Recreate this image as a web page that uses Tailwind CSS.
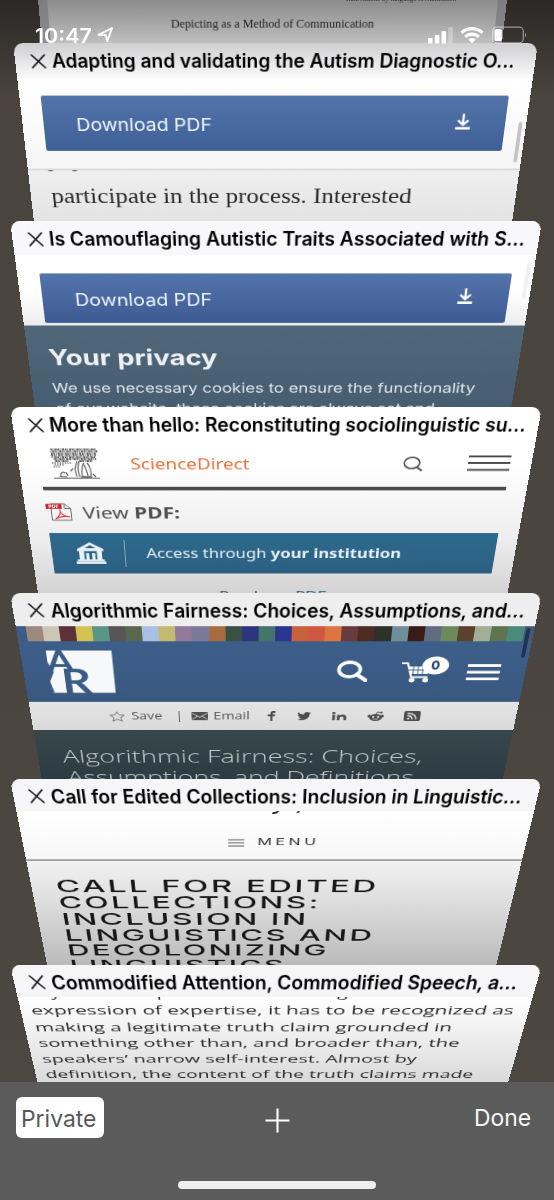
<!DOCTYPE html>
<html lang="en">
<head>
<meta charset="utf-8">
<title>Tabs</title>
<script src="https://cdn.jsdelivr.net/npm/@tailwindcss/browser@4"></script>
</head>
<body class="w-[554px] h-[1200px] overflow-hidden bg-[#4c463f] font-['Inter','Liberation_Sans',sans-serif]">
<svg class="hidden">
  <symbol id="close" viewBox="0 0 15 15"><path d="M1 1L14 14M14 1L1 14" stroke="#111" stroke-width="1.6" stroke-linecap="round"/></symbol>
  <symbol id="download" viewBox="0 0 16 17"><path d="M8 0V11.5M2.6 6.8L8 11.8L13.4 6.8" fill="none" stroke="#fff" stroke-width="2.4" stroke-linejoin="round"/><path d="M0.3 15.6H15.7" stroke="#fff" stroke-width="2.6"/></symbol>
</svg>
<div class="relative w-[554px] h-[1200px] overflow-hidden bg-linear-to-b from-[#2b2826] via-[#4a443e] via-8% to-[#4c4740]">

  <!-- status bar -->
  <div class="absolute z-20 top-0 left-0 w-full h-[46px] pt-[24px] pl-[35px] pr-[27px] flex items-start text-white">
    <div class="w-[57px] h-6 leading-[24px] text-[20px] font-semibold whitespace-nowrap"><span class="inline-block origin-left" data-w="57">10:47</span></div>
    <svg class="ml-[5px] mt-[3px] w-[17px] h-[16px]" viewBox="0 0 17 16"><path d="M1.5 7.8L15 1.2L10.3 14.2L8.8 8.2Z" fill="none" stroke="#fff" stroke-width="1.9" stroke-linejoin="round"/></svg>
    <svg class="ml-auto mt-[3px] w-[25px] h-[17px]" viewBox="0 0 25 17"><rect x="0" y="11" width="4.6" height="5.5" rx="1" fill="#fff"/><rect x="6.8" y="8" width="4.6" height="8.5" rx="1" fill="#fff"/><rect x="13.5" y="4" width="4.6" height="12.5" rx="1" fill="#fff"/><rect x="20.2" y="0" width="4.6" height="16.5" rx="1" fill="#fff" opacity=".3"/></svg>
    <svg class="ml-[7px] mt-[2px] w-[24px] h-[18px]" viewBox="0 0 24 18" fill="none" stroke="#fff" stroke-width="3.2"><path d="M1.5 6.8A15.2 15.2 0 0 1 22.5 6.8"/><path d="M5.3 10.9A9.6 9.6 0 0 1 18.7 10.9"/><path d="M12 17.2L8.3 13.6A5.3 5.3 0 0 1 15.7 13.6Z" fill="#fff" stroke="none"/></svg>
    <svg class="ml-[8px] mt-[2px] w-[35px] h-[18px]" viewBox="0 0 35 18"><rect x=".7" y="1.2" width="30.6" height="15.6" rx="4" fill="none" stroke="#fff" stroke-opacity=".5" stroke-width="1.2"/><rect x="2.4" y="3" width="7.4" height="12" rx="1.6" fill="#fff"/><path d="M33 6.5Q35 9 33 11.5Z" fill="#fff" opacity=".55"/></svg>
  </div>

  <!-- tab 0 -->
  <div class="h-[43px] overflow-hidden pl-[38px]">
    <div class="w-[469px] h-[60px] origin-[210px_0] [transform:matrix3d(1,0,0,0,0,1,0,0.00045,0,0,1,0,0,0,0,1)] bg-linear-to-b from-[#8b8b8b] to-[#bdbdbd] to-70% border-x-[9px] border-[#77777d]/70 flex flex-col font-['Liberation_Serif',serif] text-[#222]">
      <div class="h-[10px] leading-[10px] -mt-[7px] pl-[299px] text-[9px] whitespace-nowrap text-[#333]"><span class="inline-block origin-left" data-w="110">Innovations by language revitalization</span></div>
      <div class="mt-[13px] h-[16px] leading-[16px] pl-[123px] text-[12px] whitespace-nowrap"><span class="inline-block origin-left" data-w="205">Depicting as a Method of Communication</span></div>
    </div>
  </div>

  <!-- tab 1 -->
  <div class="h-[178px] overflow-hidden pl-[13px]">
    <div class="relative w-[525px] h-[220px] origin-[235px_0] [transform:matrix3d(1,0,0,0,0,1,0,0.0005,0,0,1,0,0,0,0,1)] rounded-t-[10px] bg-linear-to-b from-[#cfcfd2] via-white via-18% to-[#f6f6f6] to-60% overflow-hidden flex flex-col">
      <div class="h-[35px] shrink-0 pl-[16px] pt-px flex items-center whitespace-nowrap">
        <svg class="w-[15px] h-[15px]"><use href="#close"/></svg>
        <div class="ml-[6px] text-[19.5px] leading-[28px] font-semibold text-black origin-left" data-w="468">Adapting and validating the Autism Diagnostic O...</div>
      </div>
      <div class="mt-[19px] ml-[22px] w-[481px] h-[60px] shrink-0 rounded-[2px] bg-linear-to-b from-[#5374ab] to-[#3f6097] flex items-center text-[#eef5ff]">
        <div class="w-[377px] ml-[34px] text-[19px] whitespace-nowrap pt-[4px]"><span class="inline-block origin-left" data-w="141">Download PDF</span></div>
        <svg class="ml-[18px] -mt-[4px] w-[16px] h-[18px]"><use href="#download"/></svg>
      </div>
      <div class="mt-[20px] h-[86px] shrink-0 overflow-hidden border-t-2 border-[#dadada] bg-linear-to-b from-[#efefef] to-[#dedede] font-['Liberation_Serif',serif] text-[25px] text-[#2b2b2b] whitespace-nowrap">
        <div class="-mt-[27px] h-[30px] leading-[30px] pl-[21px]"><span class="inline-block origin-left" data-w="39">pop</span></div>
        <div class="mt-[12px] h-[30px] leading-[30px] pl-[22px]"><span class="inline-block origin-left" data-w="390">participate in the process. Interested</span></div>
      </div>
      <div class="absolute left-[517px] top-[82px] w-[4px] h-[45px] rounded-full bg-[#c4c4c6]"></div>
    </div>
  </div>

  <!-- tab 2 -->
  <div class="h-[186px] overflow-hidden pl-[9.5px]">
    <div class="relative w-[532px] h-[240px] origin-[238.5px_0] [transform:matrix3d(1,0,0,0,0,1,0,0.00056,0,0,1,0,0,0,0,1)] rounded-t-[10px] bg-white overflow-hidden flex flex-col">
      <div class="h-[35px] pl-[16px] pt-px bg-[#f8f8fa] flex items-center whitespace-nowrap">
        <svg class="w-[15px] h-[15px]"><use href="#close"/></svg>
        <div class="ml-[6px] text-[19.5px] leading-[28px] font-semibold text-black origin-left" data-w="481">Is Camouflaging Autistic Traits Associated with S...</div>
      </div>
      <div class="h-[76px] pt-[18.5px] pl-[22.5px] bg-linear-to-b from-white from-50% to-[#ececec]">
        <div class="w-[487px] h-[54.5px] rounded-[2px] bg-linear-to-b from-[#5374ab] to-[#3d5b93] flex items-center text-[#eef5ff]">
          <div class="w-[386px] ml-[34px] text-[18px] whitespace-nowrap pt-[3px]"><span class="inline-block origin-left" data-w="143">Download PDF</span></div>
          <svg class="ml-[14.5px] -mt-[4px] w-[16px] h-[17px]"><use href="#download"/></svg>
        </div>
      </div>
      <div class="h-[129px] bg-linear-to-b from-[#4f6778] to-[#445a70] text-[#dfe5ea] whitespace-nowrap">
        <div class="pt-[22px] h-[52px] leading-[30px] pl-[21.5px] text-[25px] font-bold text-[#eef1f4]"><span class="inline-block origin-left" data-w="183">Your privacy</span></div>
        <div class="mt-[9px] h-[25px] leading-[25px] pl-[22px] text-[16.5px]"><span class="inline-block origin-left" data-w="467">We use necessary cookies to ensure the functionality</span></div>
        <div class="h-[25px] leading-[25px] pl-[23px] text-[16.5px]"><span class="inline-block origin-left" data-w="423">of our website, these cookies are always set and</span></div>
      </div>
      <div class="absolute left-[523.5px] top-[42px] w-[4px] h-[40px] rounded-full bg-[#f1f1f1]"></div>
    </div>
  </div>

  <!-- tab 3 -->
  <div class="h-[186px] overflow-hidden pl-[9.5px]">
    <div class="w-[532px] h-[240px] origin-[238.5px_0] [transform:matrix3d(1,0,0,0,0,1,0,0.00063,0,0,1,0,0,0,0,1)] rounded-t-[10px] bg-linear-to-b from-white from-25% via-[#ededed] via-60% to-[#c8c8c8] overflow-hidden flex flex-col font-['Noto_Sans',sans-serif] whitespace-nowrap">
      <div class="h-[35px] pl-[16px] pt-px flex items-center font-['Inter',sans-serif]">
        <svg class="w-[15px] h-[15px]"><use href="#close"/></svg>
        <div class="ml-[6px] text-[19.5px] leading-[28px] font-semibold text-black origin-left" data-w="483">More than hello: Reconstituting sociolinguistic su...</div>
      </div>
      <div class="h-[48.5px] pt-[7px] pl-[33px] flex items-start">
        <svg class="w-[51px] h-[34px]" viewBox="0 0 51 34" fill="none" stroke="#555">
          <g stroke-width="2" stroke-dasharray="1.6 .9 .7 1.2 2.2 .8"><path d="M2 1.5H49"/><path d="M1 3.6H50" stroke-dashoffset="2"/><path d="M2 5.7H49" stroke-dashoffset="5"/><path d="M1 7.8H48" stroke-dashoffset="3.6"/><path d="M2 9.9H48" stroke-dashoffset="1"/><path d="M4 12H48" stroke-dashoffset="6"/><path d="M5 14H20M30 14H45" stroke-dashoffset="4"/></g>
          <g stroke-width="1.6" stroke-dasharray="1.2 1.4"><path d="M2 16H22"/><path d="M3 18H14" stroke-dashoffset="1"/><path d="M3 20H10"/></g>
          <path d="M28 14L25 22L26 31M30 14L28 22L29 31M35 16Q31 20 32 31H38M38 16Q42 20 41 31H36M35 18L38 30M14 27Q11 24 9 30M15 26L17 30M20 25L23 22M43 28L46 31" stroke-width="1.1"/>
          <path d="M2 32.5H50M8 30.5L16 31M30 31H42" stroke-width="1.1"/>
        </svg>
        <div class="ml-[32px] mt-[7px] w-[275px] h-[20px] leading-[20px] text-[15.5px] text-[#e4713a]"><span class="inline-block origin-left" data-w="124">ScienceDirect</span></div>
        <svg class="ml-[8px] mt-[9px] w-[21px] h-[17px]" viewBox="0 0 21 17" fill="none" stroke="#4b4b4b" stroke-width="1.6"><ellipse cx="9" cy="7" rx="8" ry="6"/><path d="M14.5 11.5L20 15.5" stroke-width="2"/></svg>
        <svg class="ml-[46px] mt-[6px] w-[44px] h-[20px]" viewBox="0 0 44 20" stroke="#4b4b4b" stroke-width="2"><path d="M0 3H44M0 10H44M0 17.5H44"/></svg>
      </div>
      <div class="ml-[22px] w-[488px] h-[4px] bg-[#4b4a4e]"></div>
      <div class="h-[49px] pl-[21.5px] pt-[14px] flex items-start">
        <svg class="w-[28px] h-[21px]" viewBox="0 0 28 21"><path d="M5.5 1H20L26.5 6.5V20H5.5Z" fill="#f4f4f4" stroke="#666" stroke-width="1"/><path d="M20 1V6.5H26.5" fill="none" stroke="#666"/><rect x="0" y="1.2" width="17" height="5.6" fill="#c5202b"/><text x="3" y="5.8" font-size="5" font-weight="700" fill="#fff" textLength="11" lengthAdjust="spacingAndGlyphs">PDF</text><path d="M9 18.5C13 16 16 11 15 8.5C14.5 12 18 16 25 16C19 14.5 13 16 9 18.5Z" fill="none" stroke="#d8333c" stroke-width="1.2"/></svg>
        <div class="ml-[11.5px] -mt-[1px] h-[24px] leading-[24px] text-[17.5px] text-[#505050]"><span class="inline-block origin-left" data-w="104">View <b>PDF:</b></span></div>
      </div>
      <div class="ml-[22px] w-[487.5px] h-[49.5px] bg-linear-to-b from-[#2c6a8d] to-[#2c5f82] flex items-center text-[#e6f0f6]">
        <svg class="ml-[26px] w-[33px] h-[26px]" viewBox="0 0 33 26" fill="#eaf2f7"><path d="M16.5 0L31 8V10.5H2V8Z"/><path d="M16.5 3.2L10.5 7H22.5Z" fill="#2c6487"/><rect x="4" y="10" width="5.5" height="12"/><rect x="23.5" y="10" width="5.5" height="12"/><rect x="11.5" y="13" width="3.4" height="9"/><rect x="18.1" y="13" width="3.4" height="9"/><rect x="1.5" y="20.5" width="30" height="2.4"/><rect x="0" y="23.3" width="33" height="2.7"/></svg>
        <div class="ml-[21px] w-px h-[33px] bg-[#8fb1c4]"></div>
        <div class="ml-[23px] text-[16px]"><span class="inline-block origin-left" data-w="281">Access through <b>your institution</b></span></div>
      </div>
      <div class="mt-[16px] pl-[205px] h-[24px] leading-[24px] text-[17px] text-[#555]"><span class="inline-block origin-left" data-w="121">Purchase <span class="text-[#2c6487]">PDF</span></span></div>
    </div>
  </div>

  <!-- tab 4 -->
  <div class="h-[186px] overflow-hidden pl-[9.5px]">
    <div class="relative w-[532px] h-[240px] origin-[238.5px_0] [transform:matrix3d(1,0,0,0,0,1,0,0.000716,0,0,1,0,0,0,0,1)] rounded-t-[10px] bg-[#2f3e43] overflow-hidden flex flex-col whitespace-nowrap">
      <div class="h-[34px] shrink-0 pl-[16px] pt-px bg-[#eeeeef] flex items-center">
        <svg class="w-[15px] h-[15px]"><use href="#close"/></svg>
        <div class="ml-[6.5px] text-[19.5px] leading-[28px] font-semibold text-black origin-left" data-w="480.5">Algorithmic Fairness: Choices, Assumptions, and...</div>
      </div>
      <div class="h-[16.4px] shrink-0 pl-[9.5px] bg-[#4a5878] flex">
        <i class="w-[9.5px] -ml-[9.5px] shrink-0 bg-[#3b5b88]"></i>
        <i class="w-[17.1px] bg-[#9b8a7c]"></i><i class="w-[17.1px] bg-[#cdc6b6]"></i><i class="w-[17.1px] bg-[#5b3337]"></i><i class="w-[17.1px] bg-[#d2c254]"></i><i class="w-[17.1px] bg-[#5a9688]"></i><i class="w-[17.1px] bg-[#585558]"></i><i class="w-[17.1px] bg-[#57684f]"></i><i class="w-[17.1px] bg-[#a8c0e6]"></i><i class="w-[17.1px] bg-[#c4b972]"></i><i class="w-[17.1px] bg-[#917a9c]"></i><i class="w-[17.1px] bg-[#7c7898]"></i><i class="w-[17.1px] bg-[#a76b40]"></i><i class="w-[17.1px] bg-[#3a5044]"></i><i class="w-[17.1px] bg-[#2b367f]"></i><i class="w-[17.1px] bg-[#42766a]"></i><i class="w-[17.1px] bg-[#2a3590]"></i><i class="w-[17.1px] bg-[#c8603d]"></i><i class="w-[17.1px] bg-[#cf5843]"></i><i class="w-[17.1px] bg-[#dd7540]"></i><i class="w-[17.1px] bg-[#663c3c]"></i><i class="w-[17.1px] bg-[#4e2c23]"></i><i class="w-[17.1px] bg-[#2e302b]"></i><i class="w-[17.1px] bg-[#6f8e9c]"></i><i class="w-[17.1px] bg-[#3b1b15]"></i><i class="w-[17.1px] bg-[#5f6c82]"></i><i class="w-[17.1px] bg-[#6d8a5c]"></i><i class="w-[17.1px] bg-[#5c422c]"></i><i class="w-[17.1px] bg-[#a3ae97]"></i><i class="w-[17.1px] bg-[#5f7350]"></i><i class="w-[17.1px] bg-[#4a8a7c]"></i>
      </div>
      <div class="h-[67.5px] shrink-0 bg-linear-to-b from-[#3c5f8a] to-[#395880] pl-[27px] pt-[10px] flex items-start">
        <svg class="w-[68.5px] h-[47.5px] overflow-visible" viewBox="0 0 68.5 47.5"><rect width="68.5" height="47.5" fill="#f6f8fa"/><path d="M0 13L5 24L0 34V47.5H3L0 36Z" fill="#3b5c87"/><text x="-1.5" y="24" font-family="Lato" font-weight="700" font-size="33" textLength="29" lengthAdjust="spacingAndGlyphs" fill="#3b5c87">A</text><text x="12" y="47.8" font-family="Lato" font-weight="700" font-size="39" textLength="32" lengthAdjust="spacingAndGlyphs" fill="#3b5c87">R</text></svg>
        <svg class="ml-[236px] mt-[11px] w-[33px] h-[24px]" viewBox="0 0 33 24" fill="none" stroke="#fff"><ellipse cx="13.5" cy="10" rx="11.3" ry="8.2" stroke-width="3.8"/><path d="M21.5 15.5L31 22" stroke-width="4.4" stroke-linecap="round"/></svg>
        <svg class="ml-[35px] mt-[6px] w-[51px] h-[30px]" viewBox="0 0 51 30"><path d="M0 8H6.5L11.5 23.5H29" fill="none" stroke="#fff" stroke-width="2.2"/><path d="M7.5 11.5H31L28.5 20H10Z" fill="#fff"/><path d="M13 11V20M18 11V20M23 11V20M8 15.5H30" stroke="#3b5c87" stroke-width="1"/><ellipse cx="12.5" cy="27" rx="3.1" ry="2.4" fill="#fff"/><ellipse cx="27" cy="27" rx="3.1" ry="2.4" fill="#fff"/><ellipse cx="36" cy="10.5" rx="14" ry="10" fill="#fff"/><text x="36" y="15.2" text-anchor="middle" font-family="Inter" font-weight="800" font-size="13.5" fill="#27496f">0</text></svg>
        <svg class="ml-[19px] mt-[14px] w-[35.5px] h-[20px]" viewBox="0 0 35.5 20" stroke="#fff" stroke-width="2.8"><path d="M0 2.5H35.5M0 10H35.5M0 17.5H35.5"/></svg>
      </div>
      <div class="h-[34.5px] shrink-0 pl-[86px] bg-linear-to-b from-[#e4e4e4] to-[#dadada] flex items-center font-['Open_Sans',sans-serif] text-[12px] text-[#555]">
        <svg class="w-[17px] h-[13px]" viewBox="0 0 17 13"><path d="M8.5 .8L10.8 4.6L16.3 5L12.2 7.8L13.5 12.2L8.5 9.8L3.5 12.2L4.8 7.8L.7 5L6.2 4.6Z" fill="none" stroke="#666" stroke-width=".9"/></svg>
        <div class="ml-[7px] w-[52px]"><span class="inline-block origin-left" data-w="34">Save</span></div>
        <div class="w-px h-[13px] bg-[#555]"></div>
        <svg class="ml-[13px] w-[18px] h-[10px]" viewBox="0 0 18 10"><rect width="18" height="10" rx="1" fill="#505050"/><path d="M.5 1.5L9 6.5L17.5 1.5M.5 9L6.5 5M17.5 9L11.5 5" fill="none" stroke="#ddd" stroke-width=".9"/></svg>
        <div class="ml-[6px] w-[59px]"><span class="inline-block origin-left" data-w="40.5">Email</span></div>
        <svg class="w-[9px] h-[12px]" viewBox="0 0 9 12"><path d="M9 1.1H7Q4.6 1.1 4.6 3.2V12M.6 5.2H8.5" fill="none" stroke="#4c4c4c" stroke-width="2.3"/></svg>
        <svg class="ml-[24px] w-[15px] h-[10px]" viewBox="0 2 24 20" preserveAspectRatio="none"><path fill="#4c4c4c" d="M24 4.6a10 10 0 0 1-2.8.8 5 5 0 0 0 2.2-2.7 10 10 0 0 1-3.1 1.2 4.9 4.9 0 0 0-8.4 4.5A14 14 0 0 1 1.7 3.1a4.9 4.9 0 0 0 1.5 6.6 5 5 0 0 1-2.2-.6 4.9 4.9 0 0 0 3.9 4.9 5 5 0 0 1-2.2.1 4.9 4.9 0 0 0 4.6 3.4A10 10 0 0 1 0 19.5 14 14 0 0 0 21.5 7.1 10 10 0 0 0 24 4.6z"/></svg>
        <svg class="ml-[23px] w-[16px] h-[10px]" viewBox="0 0 16 10" fill="#4c4c4c"><ellipse cx="1.9" cy="1.3" rx="1.8" ry="1.3"/><rect x=".4" y="3.4" width="3" height="6.6"/><path d="M5.6 3.4H8.4V4.4Q9.5 3.2 11.6 3.2Q15.8 3.2 15.8 6.6V10H12.8V7Q12.8 5.4 10.9 5.4Q8.6 5.4 8.6 7.2V10H5.6Z"/></svg>
        <svg class="ml-[23px] w-[18px] h-[12px]" viewBox="0 0 18 12"><ellipse cx="9" cy="7.8" rx="7" ry="4.2" fill="#4c4c4c"/><circle cx="1.8" cy="6" r="1.7" fill="#4c4c4c"/><circle cx="16.2" cy="6" r="1.7" fill="#4c4c4c"/><path d="M9 4L10.5 1L14.5 1.8" fill="none" stroke="#4c4c4c" stroke-width=".9"/><circle cx="15" cy="1.6" r="1.2" fill="#4c4c4c"/><circle cx="6.3" cy="7" r="1.2" fill="#ddd"/><circle cx="11.7" cy="7" r="1.2" fill="#ddd"/><path d="M5.8 9.4Q9 11 12.2 9.4" fill="none" stroke="#ddd" stroke-width=".8"/></svg>
        <svg class="ml-[22px] w-[18px] h-[12px]" viewBox="0 0 18 12"><rect width="18" height="12" rx="2" fill="#4c4c4c"/><ellipse cx="5" cy="9.1" rx="1.5" ry="1.1" fill="#e5e5e5"/><path d="M3.5 5.6Q9 5.6 9.2 10M3.5 2.6Q13 2.8 13.5 10" fill="none" stroke="#e5e5e5" stroke-width="1.5"/></svg>
      </div>
      <div class="h-[90px] bg-linear-to-b from-[#37474b] to-[#29373f] font-['Open_Sans',sans-serif] font-light text-[22.5px] text-[#c0c8ca]">
        <div class="pt-[19px] pl-[27.5px] h-[46px] leading-[28px]"><span class="inline-block origin-left" data-w="407">Algorithmic Fairness: Choices,</span></div>
        <div class="pl-[29.5px] h-[28px] leading-[28px]"><span class="inline-block origin-left" data-w="399">Assumptions, and Definitions</span></div>
      </div>
      <div class="absolute left-[524px] top-[36px] w-[4px] h-[32px] rounded-full bg-[#1b3458]"></div>
    </div>
  </div>

  <!-- tab 5 -->
  <div class="h-[186px] overflow-hidden pl-[9.5px]">
    <div class="w-[532px] h-[240px] origin-[238.5px_0] [transform:matrix3d(1,0,0,0,0,1,0,0.000837,0,0,1,0,0,0,0,1)] rounded-t-[10px] bg-white overflow-hidden flex flex-col whitespace-nowrap">
      <div class="h-[33px] shrink-0 pl-[16px] pt-[2px] bg-[#f6f6f8] flex items-center">
        <svg class="w-[15px] h-[15px]"><use href="#close"/></svg>
        <div class="ml-[6.5px] text-[19.5px] leading-[28px] font-semibold text-black origin-left" data-w="478.5">Call for Edited Collections: Inclusion in Linguistic...</div>
      </div>
      <div class="h-[53px] shrink-0 overflow-hidden bg-linear-to-b from-white to-[#f7f7f7]">
        <div class="-mt-[25px] h-[30px] leading-[30px] pl-[263px] text-[24px] text-[#222] italic"><span class="inline-block origin-left" data-w="34">y ,</span></div>
        <div class="mt-[21px] pl-[216.5px] h-[16px] flex items-center">
          <svg class="w-[17.5px] h-[9px]" viewBox="0 0 17.5 9" stroke="#555" stroke-width="1.2"><path d="M0 1H17.5M0 4.5H17.5M0 8H17.5"/></svg>
          <div class="ml-[14px] text-[10.5px] leading-[16px] tracking-[0.22em] text-[#333]"><span class="inline-block origin-left" data-w="66">MENU</span></div>
        </div>
      </div>
      <div class="h-[2.2px] shrink-0 bg-[#a2a2a2]"></div>
      <div class="h-[152px] shrink-0 pt-[19.5px] bg-linear-to-b from-[#f2f2f2] to-[#b2b2b2] text-[20px] leading-[20.7px] font-medium tracking-[0.08em] text-[#171717] pl-[26.5px]">
        <div class="h-[20.7px]"><span class="inline-block origin-left" data-w="354">CALL FOR EDITED</span></div>
        <div class="h-[20.7px]"><span class="inline-block origin-left" data-w="293">COLLECTIONS:</span></div>
        <div class="h-[20.7px]"><span class="inline-block origin-left" data-w="279">INCLUSION IN</span></div>
        <div class="h-[20.7px]"><span class="inline-block origin-left" data-w="356">LINGUISTICS AND</span></div>
        <div class="h-[20.7px]"><span class="inline-block origin-left" data-w="306">DECOLONIZING</span></div>
        <div class="h-[20.7px]"><span class="inline-block origin-left" data-w="256">LINGUISTICS</span></div>
      </div>
    </div>
  </div>

  <!-- tab 6 -->
  <div class="h-[117px] overflow-hidden pl-[9.5px]">
    <div class="w-[532px] h-[160px] origin-[238.5px_0] [transform:matrix3d(1,0,0,0,0,1,0,0.000985,0,0,1,0,0,0,0,1)] rounded-t-[10px] bg-white overflow-hidden flex flex-col whitespace-nowrap">
      <div class="h-[33px] pl-[16px] pt-[2px] bg-[#f6f6f8] flex items-center">
        <svg class="w-[15px] h-[15px]"><use href="#close"/></svg>
        <div class="ml-[6.5px] text-[19.5px] leading-[28px] font-semibold text-black origin-left" data-w="474.5">Commodified Attention, Commodified Speech, a...</div>
      </div>
      <div class="h-[127px] overflow-hidden bg-linear-to-b from-white to-[#cfcfcf] font-['Open_Sans',sans-serif] text-[12.5px] leading-[18.75px] text-[#2a2a2a] pl-[11px]">
        <div class="-mt-[13px] h-[18.75px]"><span class="inline-block origin-left" data-w="330">any sincere expression and reading</span></div>
        <div class="h-[18.75px]"><span class="inline-block origin-left" data-w="505.5">expression of expertise, it has to be recognized as</span></div>
        <div class="h-[18.75px]"><span class="inline-block origin-left" data-w="444.5">making a legitimate truth claim grounded in</span></div>
        <div class="h-[18.75px]"><span class="inline-block origin-left" data-w="455.5">something other than, and broader than, the</span></div>
        <div class="h-[18.75px]"><span class="inline-block origin-left" data-w="412.5">speakers’ narrow self-interest. Almost by</span></div>
        <div class="h-[18.75px]"><span class="inline-block origin-left" data-w="480">definition, the content of the truth claims made</span></div>
      </div>
    </div>
  </div>

  <!-- toolbar -->
  <div class="relative h-[118px] bg-[#5b5b5b] pt-[15px] px-[16px]">
    <div class="flex items-center h-[41px] text-[23.5px] whitespace-nowrap">
      <div class="w-[88px] h-[41px] rounded-[6px] bg-white text-[#58585a] pl-[5px] leading-[43px]"><span class="inline-block origin-left" data-w="75">Private</span></div>
      <svg class="ml-[160px] mt-[5px] w-[27px] h-[27px]" viewBox="0 0 27 27"><path d="M13.5 1.5V25.5M1.5 13.5H25.5" stroke="#fff" stroke-width="2.1"/></svg>
      <div class="ml-[183px] w-[58px] text-[#f6f6f6] leading-[43px]"><span class="inline-block origin-left" data-w="57.5">Done</span></div>
    </div>
    <div class="mx-auto mt-[43px] w-[198px] h-[8px] rounded-full bg-[#efefef]"></div>
  </div>
</div>
<script>
  // Stretch each line to its set width, again whenever its natural width changes.
  function fit(el) {
    if (el.offsetWidth) el.style.transform = 'scaleX(' + (parseFloat(el.dataset.w) / el.offsetWidth) + ')';
  }
  const lines = document.querySelectorAll('[data-w]');
  const watcher = new ResizeObserver(entries => entries.forEach(e => fit(e.target)));
  lines.forEach(el => { fit(el); watcher.observe(el); });
  window.addEventListener('load', () => lines.forEach(fit));
  document.fonts.ready.then(() => lines.forEach(fit));
</script>
</body>
</html>
